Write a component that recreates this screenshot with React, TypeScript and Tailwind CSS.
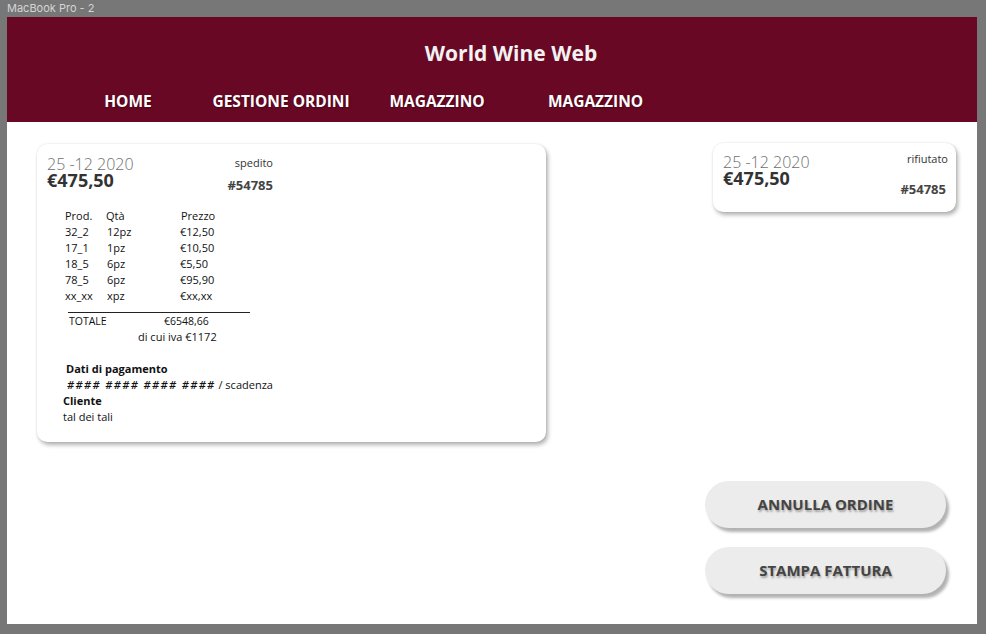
const items = [
  { code: "32_2", qty: "12pz", price: "€12,50" },
  { code: "17_1", qty: "1pz", price: "€10,50" },
  { code: "18_5", qty: "6pz", price: "€5,50" },
  { code: "78_5", qty: "6pz", price: "€95,90" },
  { code: "xx_xx", qty: "xpz", price: "€xx,xx" },
];

const navItems = [
  { name: "HOME", width: "w-[120px]" },
  { name: "GESTIONE ORDINI", width: "w-[186px]" },
  { name: "MAGAZZINO", width: "w-[126px]" },
  { name: "MAGAZZINO", width: "w-[191px]" },
];

const App = () => {
  return (
    <div className="w-[986px] h-[634px] bg-[#777777] px-[7px] font-['Open_Sans',sans-serif] overflow-hidden">
      <div className="h-[17px] text-[11px] leading-[17px] text-[#d4d4d4] font-['Inter',sans-serif]">
        MacBook Pro - 2
      </div>

      <div className="w-[970px] h-[607px] bg-white flex flex-col">
        {/* Header */}
        <header className="h-[105px] bg-[#690824] flex flex-col">
          <h1 className="pt-[22px] pl-[38px] text-center text-[21px] leading-[28px] font-bold text-[#f2f2f2]">
            World Wine Web
          </h1>
          <nav className="mt-[24px] pl-[61px] flex text-[15.5px] leading-[20px] font-bold text-white [text-shadow:1px_1px_2px_rgba(0,0,0,0.35)]">
            {navItems.map((item, i) => (
              <span key={i} className={`${item.width} text-center`}>
                {item.name}
              </span>
            ))}
          </nav>
        </header>

        {/* Body */}
        <div className="flex flex-1">
          {/* Order detail card */}
          <div className="ml-[30px] mt-[22px] w-[509px] h-[298px] bg-white rounded-[10px] shadow-[2px_3px_4px_rgba(0,0,0,0.3),0_0_2px_rgba(0,0,0,0.12)] pl-[10px] pt-[12px]">
            <div className="flex w-[226px] justify-between">
              <div>
                <div className="text-[16px] leading-[16px] font-light text-[#6e6e6e]">25 -12 2020</div>
                <div className="text-[18px] leading-[16px] font-bold text-[#333]">€475,50</div>
              </div>
              <div className="flex flex-col items-end">
                <div className="text-[11px] leading-[14px] text-[#333]">spedito</div>
                <div className="mt-[7px] text-[13px] leading-[16px] font-bold text-[#444]">#54785</div>
              </div>
            </div>

            <div className="mt-[15px] ml-[18px] text-[11px] leading-[16px] text-[#111]">
              <div className="grid grid-cols-[41px_74px_80px]">
                <span>Prod.</span>
                <span>Qtà</span>
                <span className="pl-[1px]">Prezzo</span>
                {items.map((it) => (
                  <>
                    <span key={it.code + "c"}>{it.code}</span>
                    <span key={it.code + "q"} className="pl-[1px]">{it.qty}</span>
                    <span key={it.code + "p"}>{it.price}</span>
                  </>
                ))}
              </div>
              <div className="mt-[8px] ml-[3px] w-[182px] border-t border-[#222]" />
              <div className="flex pl-[4px] text-[10.5px]">
                <span className="w-[95px]">TOTALE</span>
                <span>€6548,66</span>
              </div>
              <div className="pl-[73px]">di cui iva €1172</div>
              <div className="mt-[16px] pl-[1px] font-bold">Dati di pagamento</div>
              <div className="pl-[2px]">
                <span className="italic font-semibold tracking-[1.4px]">#### #### #### ####</span> / scadenza
              </div>
              <div className="-ml-[2px] font-bold">Cliente</div>
              <div className="-ml-[2px]">tal dei tali</div>
            </div>
          </div>

          {/* Right column */}
          <div className="ml-auto mr-[21px] w-[251px] flex flex-col">
            <div className="ml-[8px] mt-[21px] w-[243px] h-[69px] bg-white rounded-[10px] shadow-[2px_3px_4px_rgba(0,0,0,0.3),0_0_2px_rgba(0,0,0,0.12)] pl-[10px] pr-[8px] pt-[9px] flex justify-between">
              <div className="pt-[2px]">
                <div className="text-[16px] leading-[16px] font-light text-[#6e6e6e]">25 -12 2020</div>
                <div className="text-[18px] leading-[16px] font-bold text-[#333]">€475,50</div>
              </div>
              <div className="flex flex-col items-end">
                <div className="text-[11px] leading-[14px] text-[#333]">rifiutato</div>
                <div className="mt-[15px] mr-[2px] text-[13px] leading-[16px] font-bold text-[#444]">#54785</div>
              </div>
            </div>

            <button className="mt-[269px] w-[241px] h-[47px] rounded-full bg-[#ececec] shadow-[3px_4px_3px_rgba(0,0,0,0.3)] text-[15px] font-bold text-[#444] [text-shadow:1px_2px_2px_rgba(0,0,0,0.3)]">
              ANNULLA ORDINE
            </button>
            <button className="mt-[19px] w-[241px] h-[47px] rounded-full bg-[#ececec] shadow-[3px_4px_3px_rgba(0,0,0,0.3)] text-[15px] font-bold text-[#444] [text-shadow:1px_2px_2px_rgba(0,0,0,0.3)]">
              STAMPA FATTURA
            </button>
          </div>
        </div>
      </div>
    </div>
  );
};

export default App;
